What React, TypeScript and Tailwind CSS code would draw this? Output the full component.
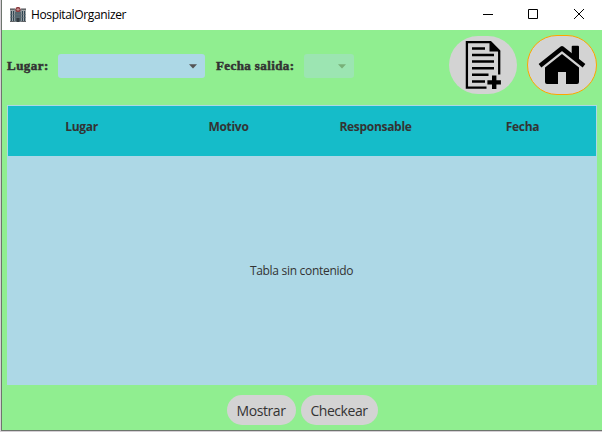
import React from 'react';

function HospitalIcon() {
  return (
    <svg width="16" height="16" viewBox="0 0 16 16" className="shrink-0">
      <path d="M0 2h16v13H0z" fill="#a0a5a8" />
      <path d="M0 1.500h5v1.200H0zM11 1.500h5v1.200h-5zM0 14.200h16V15H0z" fill="#4d4f52" />
      <path d="M4.500 2h7v13h-7z" fill="#7d878c" />
      <path d="M1 4h1v10H1zM3 4h1v10H3zM12 4h1v10h-1zM14 4h1v10h-1zM5.500 5h1v9h-1zM7.500 5h1v9h-1zM9.500 5h1v9h-1z" fill="#2f4652" />
      <path d="M0 7h16v.6H0zM0 10.500h16v.6H0z" fill="#66737a" />
      <path d="M6.500 11h3v4h-3z" fill="#343c42" />
      <circle cx="8" cy="2.500" r="2.600" fill="#8a3d40" />
      <path d="M7.500 1h1v1h1v1h-1v1h-1V3h-1V2h1z" fill="#c98f8f" />
    </svg>
  );
}

function Arrow({ color }: { color: string }) {
  return (
    <svg width="8" height="5" viewBox="0 0 8 5">
      <path d="M0 .2h8L4 4.400z" fill={color} />
    </svg>
  );
}

function DocumentIcon() {
  return (
    <svg width="36" height="50" viewBox="0 0 36 50">
      <path d="M34.200 34.500V11L25.500 2.100H1.900v45.500H21.500" fill="none" stroke="#000" strokeWidth="2.300" />
      <path d="M24.500 1v10.500H35.300z" fill="#000" />
      <path d="M7 8.500h13M7 15h22M7 21.500h22M7 28.200h22M7 34.800h16.500M7 41.500h13" stroke="#000" strokeWidth="2.400" />
      <path d="M27 35.500h4.400v4.700h4.500v4.400h-4.500V49H27v-4.400h-4.600v-4.400H27z" fill="#000" />
    </svg>
  );
}

function HouseIcon() {
  return (
    <svg width="48" height="40" viewBox="0 0 48 40">
      <path d="M33.700 1.800q0-1 1-1h5.300q1 0 1 1V15l-7.300-6z" fill="#000" />
      <path d="M2 20.700L24 3.200l22 17.500" fill="none" stroke="#000" strokeWidth="4.400" strokeLinejoin="round" />
      <path d="M24 9l17 13.500V37q0 2-2 2H28V27h-8v12H9q-2 0-2-2V22.500z" fill="#000" />
    </svg>
  );
}

const columns = ['Lugar', 'Motivo', 'Responsable', 'Fecha'];

export default function App() {
  return (
    <div className="h-[432px] w-[602px] overflow-hidden border-b border-l border-[#d5cfd5] font-['Open_Sans','Noto_Sans',sans-serif] text-[#333]">
      <div className="flex h-[431px] flex-col border-b border-l border-[#6d756d] bg-[#90ee90]">
        <header className="flex h-[30px] shrink-0 items-center bg-white pl-2 text-black">
          <HospitalIcon />
          <span className="ml-[5px] text-[12px] tracking-[-0.36px] whitespace-nowrap">HospitalOrganizer</span>
          <svg className="ml-auto" width="120" height="30" viewBox="0 0 120 30" fill="none" stroke="#000">
            <path d="M1 14.500h10" />
            <path d="M46.500 9.500h9v9h-9z" />
            <path d="M92 9l10 10M102 9L92 19" />
          </svg>
        </header>

        <section className="flex h-[75px] shrink-0 items-start px-[5px] pt-[5px] font-['Liberation_Serif',serif]">
          <div className="flex h-[62px] items-center text-[13px] font-bold whitespace-nowrap">
            <span className="w-[51px] tracking-[0.48px] [-webkit-text-stroke:0.5px_#333]">Lugar:</span>
            <div className="flex h-6 w-[147px] items-center justify-end rounded-[3px] bg-[#add8e6] pr-2">
              <Arrow color="#555" />
            </div>
            <span className="ml-[11px] w-[88px] tracking-[0.4px] [-webkit-text-stroke:0.5px_#333]">Fecha salida:</span>
            <div className="flex h-6 w-[50px] items-center justify-end rounded-[3px] bg-[#9ce5b2] pr-2">
              <Arrow color="#78b078" />
            </div>
          </div>
          <div className="ml-auto flex items-center gap-[10px]">
            <button className="flex h-[58px] w-[68px] items-center justify-center rounded-[29px] bg-[#d3d3d3]">
              <DocumentIcon />
            </button>
            <button className="flex h-[60px] w-[70px] items-center justify-center rounded-[30px] border border-[#ffa500] bg-[#d3d3d3]">
              <HouseIcon />
            </button>
          </div>
        </section>

        <main className="ml-[5px] h-[280px] w-[590px] shrink-0 bg-[#add8e6] p-px">
          <div className="grid h-[50px] grid-cols-4 bg-[#15bcc9] pt-3 text-[12px] leading-[18px] font-bold">
            {columns.map((column) => (
              <div key={column} className="flex justify-center whitespace-nowrap tracking-[-0.3px]">{column}</div>
            ))}
          </div>
          <div className="flex h-[229px] items-center justify-center pr-px text-[12px] tracking-[-0.3px]">Tabla sin contenido</div>
        </main>

        <footer className="flex h-[45px] shrink-0 items-start gap-[5px] pt-[10px] pl-[225px] text-[14px]">
          <button className="h-[30px] w-[69px] rounded-full bg-[#d3d3d3] pr-px tracking-[-0.4px]">Mostrar</button>
          <button className="h-[30px] w-[77px] rounded-full bg-[#d3d3d3] pr-px tracking-[-0.45px]">Checkear</button>
        </footer>
      </div>
    </div>
  );
}
